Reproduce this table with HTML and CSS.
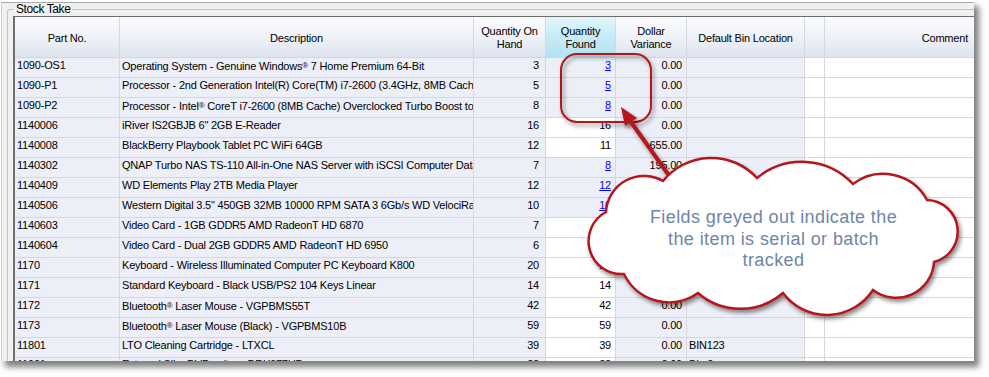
FILE: index.html
```html
<!DOCTYPE html>
<html>
<head>
<meta charset="utf-8">
<link rel="stylesheet" href="styles.css">
</head>
<body>
<div class="stage">
  <div class="shot">
    <div class="tabpage">
      <fieldset class="group">
        <legend>Stock Take</legend>
        <div class="grid">
          <div class="hd">Part No.</div>
          <div class="hd">Description</div>
          <div class="hd">Quantity On<br>Hand</div>
          <div class="hd sel">Quantity<br>Found</div>
          <div class="hd">Dollar<br>Variance</div>
          <div class="hd">Default Bin Location</div>
          <div class="hd"></div>
          <div class="hd right">Comment</div>

          <div class="c ro">1090-OS1</div><div class="c ro">Operating System - Genuine Windows<span class="reg">®</span> 7 Home Premium 64-Bit</div><div class="c ro qh">3</div><div class="c ro qf"><a href="#">3</a></div><div class="c ro dv">0.00</div><div class="c ro"></div><div class="c"></div><div class="c"></div>
          <div class="c ro">1090-P1</div><div class="c ro">Processor - 2nd Generation Intel(R) Core(TM) i7-2600 (3.4GHz, 8MB Cache)</div><div class="c ro qh">5</div><div class="c ro qf"><a href="#">5</a></div><div class="c ro dv">0.00</div><div class="c ro"></div><div class="c"></div><div class="c"></div>
          <div class="c ro">1090-P2</div><div class="c ro">Processor - Intel<span class="reg">®</span> CoreT i7-2600 (8MB Cache) Overclocked Turbo Boost to 3.8GHz</div><div class="c ro qh">8</div><div class="c ro qf"><a href="#">8</a></div><div class="c ro dv">0.00</div><div class="c ro"></div><div class="c"></div><div class="c"></div>
          <div class="c ro">1140006</div><div class="c ro">iRiver IS2GBJB 6" 2GB E-Reader</div><div class="c ro qh">16</div><div class="c qf">16</div><div class="c ro dv">0.00</div><div class="c ro"></div><div class="c"></div><div class="c"></div>
          <div class="c ro">1140008</div><div class="c ro">BlackBerry Playbook Tablet PC WiFi 64GB</div><div class="c ro qh">12</div><div class="c qf">11</div><div class="c ro dv">655.00</div><div class="c ro"></div><div class="c"></div><div class="c"></div>
          <div class="c ro">1140302</div><div class="c ro">QNAP Turbo NAS TS-110 All-in-One NAS Server with iSCSI Computer Data Storage</div><div class="c ro qh">7</div><div class="c ro qf"><a href="#">8</a></div><div class="c ro dv">195.00</div><div class="c ro"></div><div class="c"></div><div class="c"></div>
          <div class="c ro">1140409</div><div class="c ro">WD Elements Play 2TB Media Player</div><div class="c ro qh">12</div><div class="c ro qf"><a href="#">12</a></div><div class="c ro dv">0.00</div><div class="c ro"></div><div class="c"></div><div class="c"></div>
          <div class="c ro">1140506</div><div class="c ro">Western Digital 3.5" 450GB 32MB 10000 RPM SATA 3 6Gb/s WD VelociRaptor</div><div class="c ro qh">10</div><div class="c ro qf"><a href="#">10</a></div><div class="c ro dv">0.00</div><div class="c ro"></div><div class="c"></div><div class="c"></div>
          <div class="c ro">1140603</div><div class="c ro">Video Card - 1GB GDDR5 AMD RadeonT HD 6870</div><div class="c ro qh">7</div><div class="c qf">7</div><div class="c ro dv">0.00</div><div class="c ro"></div><div class="c"></div><div class="c"></div>
          <div class="c ro">1140604</div><div class="c ro">Video Card - Dual 2GB GDDR5 AMD RadeonT HD 6950</div><div class="c ro qh">6</div><div class="c qf">6</div><div class="c ro dv">0.00</div><div class="c ro"></div><div class="c"></div><div class="c"></div>
          <div class="c ro">1170</div><div class="c ro">Keyboard - Wireless Illuminated Computer PC Keyboard K800</div><div class="c ro qh">20</div><div class="c qf">20</div><div class="c ro dv">0.00</div><div class="c ro"></div><div class="c"></div><div class="c"></div>
          <div class="c ro">1171</div><div class="c ro">Standard Keyboard - Black USB/PS2 104 Keys Linear</div><div class="c ro qh">14</div><div class="c qf">14</div><div class="c ro dv">0.00</div><div class="c ro"></div><div class="c"></div><div class="c"></div>
          <div class="c ro">1172</div><div class="c ro">Bluetooth<span class="reg">®</span> Laser Mouse - VGPBMS55T</div><div class="c ro qh">42</div><div class="c qf">42</div><div class="c ro dv">0.00</div><div class="c ro"></div><div class="c"></div><div class="c"></div>
          <div class="c ro">1173</div><div class="c ro">Bluetooth<span class="reg">®</span> Laser Mouse (Black) - VGPBMS10B</div><div class="c ro qh">59</div><div class="c qf">59</div><div class="c ro dv">0.00</div><div class="c ro"></div><div class="c"></div><div class="c"></div>
          <div class="c ro">11801</div><div class="c ro">LTO Cleaning Cartridge - LTXCL</div><div class="c ro qh">39</div><div class="c qf">39</div><div class="c ro dv">0.00</div><div class="c ro">BIN123</div><div class="c"></div><div class="c"></div>
          <div class="c ro last">11901</div><div class="c ro last">External Slim DVD writer - DRX077UD</div><div class="c ro qh last">23</div><div class="c qf last">23</div><div class="c ro dv last">0.00</div><div class="c ro last">Bin 2</div><div class="c"></div><div class="c"></div>
        </div>
      </fieldset>
    </div>
  </div>

  <svg class="marks" width="989" height="377" viewBox="0 0 989 377">
    <defs>
      <filter id="sh" x="-20%" y="-20%" width="140%" height="140%">
        <feDropShadow dx="2" dy="3" stdDeviation="2" flood-color="#000" flood-opacity="0.45"/>
      </filter>
    </defs>
    <rect x="561" y="54" width="90" height="68" rx="16" ry="16" fill="none" stroke="#b5161d" stroke-width="2" filter="url(#sh)"/>
    <g filter="url(#sh)">
      <line x1="631" y1="122" x2="690" y2="205" stroke="#b5161d" stroke-width="4"/>
      <polygon points="621,107 637,118 625,126" fill="#b5161d"/>
    </g>
    <path d="M 663 181 A 62 62 0 0 1 757 178 A 70 70 0 0 1 853 184 A 50 50 0 0 1 927 200 A 31.5 31.5 0 0 1 934 262 A 38 38 0 0 1 873 290 A 55 55 0 0 1 783 293 A 65 65 0 0 1 698 293 A 50 50 0 0 1 624 274 A 33 33 0 0 1 606 212 A 38 38 0 0 1 663 181 Z" fill="#ffffff" stroke="#b5161d" stroke-width="2.5" filter="url(#sh)"/>
  </svg>
  <div class="callout-text">Fields greyed out indicate the<br>the item is serial or batch<br>tracked</div>
</div>
</body>
</html>
```

FILE: styles.css
```css
body {
  margin: 0;
  background: #ffffff;
  font-family: "Liberation Sans", Arial, sans-serif;
}

.stage {
  position: relative;
  width: 989px;
  height: 377px;
}

.shot {
  width: 974px;
  height: 361px;
  background: #ffffff;
  box-shadow: 5px 6px 6px rgba(0, 0, 0, 0.5);
  overflow: hidden;
}

.tabpage {
  box-sizing: border-box;
  margin: 2px 0 0 1px;
  height: 359px;
  background: #f0f0f0;
  border-top: 1px solid #a9a9a9;
  border-left: 1px solid #cfcfcf;
}

.group {
  margin: 0 0 0 5px;
  padding: 1px 0 0 5px;
  border: 1px solid #c3c3c3;
  border-right: 0;
  border-bottom: 0;
  border-radius: 3px 0 0 0;
  min-width: 0;
}

.group legend {
  font-size: 12px;
  line-height: 12px;
  letter-spacing: -0.4px;
  padding: 0 2px;
  margin-left: 1px;
  color: #000;
}

.grid {
  display: grid;
  grid-template-columns: 105px 354px 72px 70px 71px 118px 20px 150px;
  grid-template-rows: 41px;
  grid-auto-rows: 20px;
  width: max-content;
  border-left: 2px solid #6e6e6e;
  border-top: 1px solid #6e6e6e;
  font-size: 11px;
  letter-spacing: -0.2px;
  color: #000;
}

.hd {
  box-sizing: border-box;
  display: flex;
  align-items: center;
  justify-content: center;
  text-align: center;
  line-height: 13px;
  padding-top: 2px;
  background: linear-gradient(#fbfcfe, #f0f3f8 45%, #dde4ef);
  border-right: 1px solid #d3d9e2;
  border-bottom: 1px solid #d3d6db;
}

.hd.sel {
  background: linear-gradient(#e2f5fb, #c8ecf6 45%, #b2e1f0);
}

.hd.right {
  justify-content: flex-end;
  padding-right: 6px;
}

.c {
  box-sizing: border-box;
  line-height: 15px;
  padding: 0 2px;
  white-space: nowrap;
  overflow: hidden;
  background: #ffffff;
  border-right: 1px solid #d7d7d7;
  border-bottom: 1px solid #d7d7d7;
}

.c.ro {
  background: #eceff7;
}

.c.last {
  line-height: 12px;
}

.qh {
  text-align: right;
  padding-right: 6px;
}

.qf,
.dv {
  text-align: right;
  padding-right: 4px;
}

.c a {
  color: #0000ff;
  text-decoration: underline;
}

.reg {
  font-size: 8px;
  vertical-align: 2px;
}

.marks {
  position: absolute;
  left: 0;
  top: 0;
  pointer-events: none;
}

.callout-text {
  position: absolute;
  left: 640px;
  top: 207px;
  width: 267px;
  text-align: center;
  font-size: 18px;
  line-height: 21.5px;
  letter-spacing: 0.4px;
  color: #6e86a6;
}
```
